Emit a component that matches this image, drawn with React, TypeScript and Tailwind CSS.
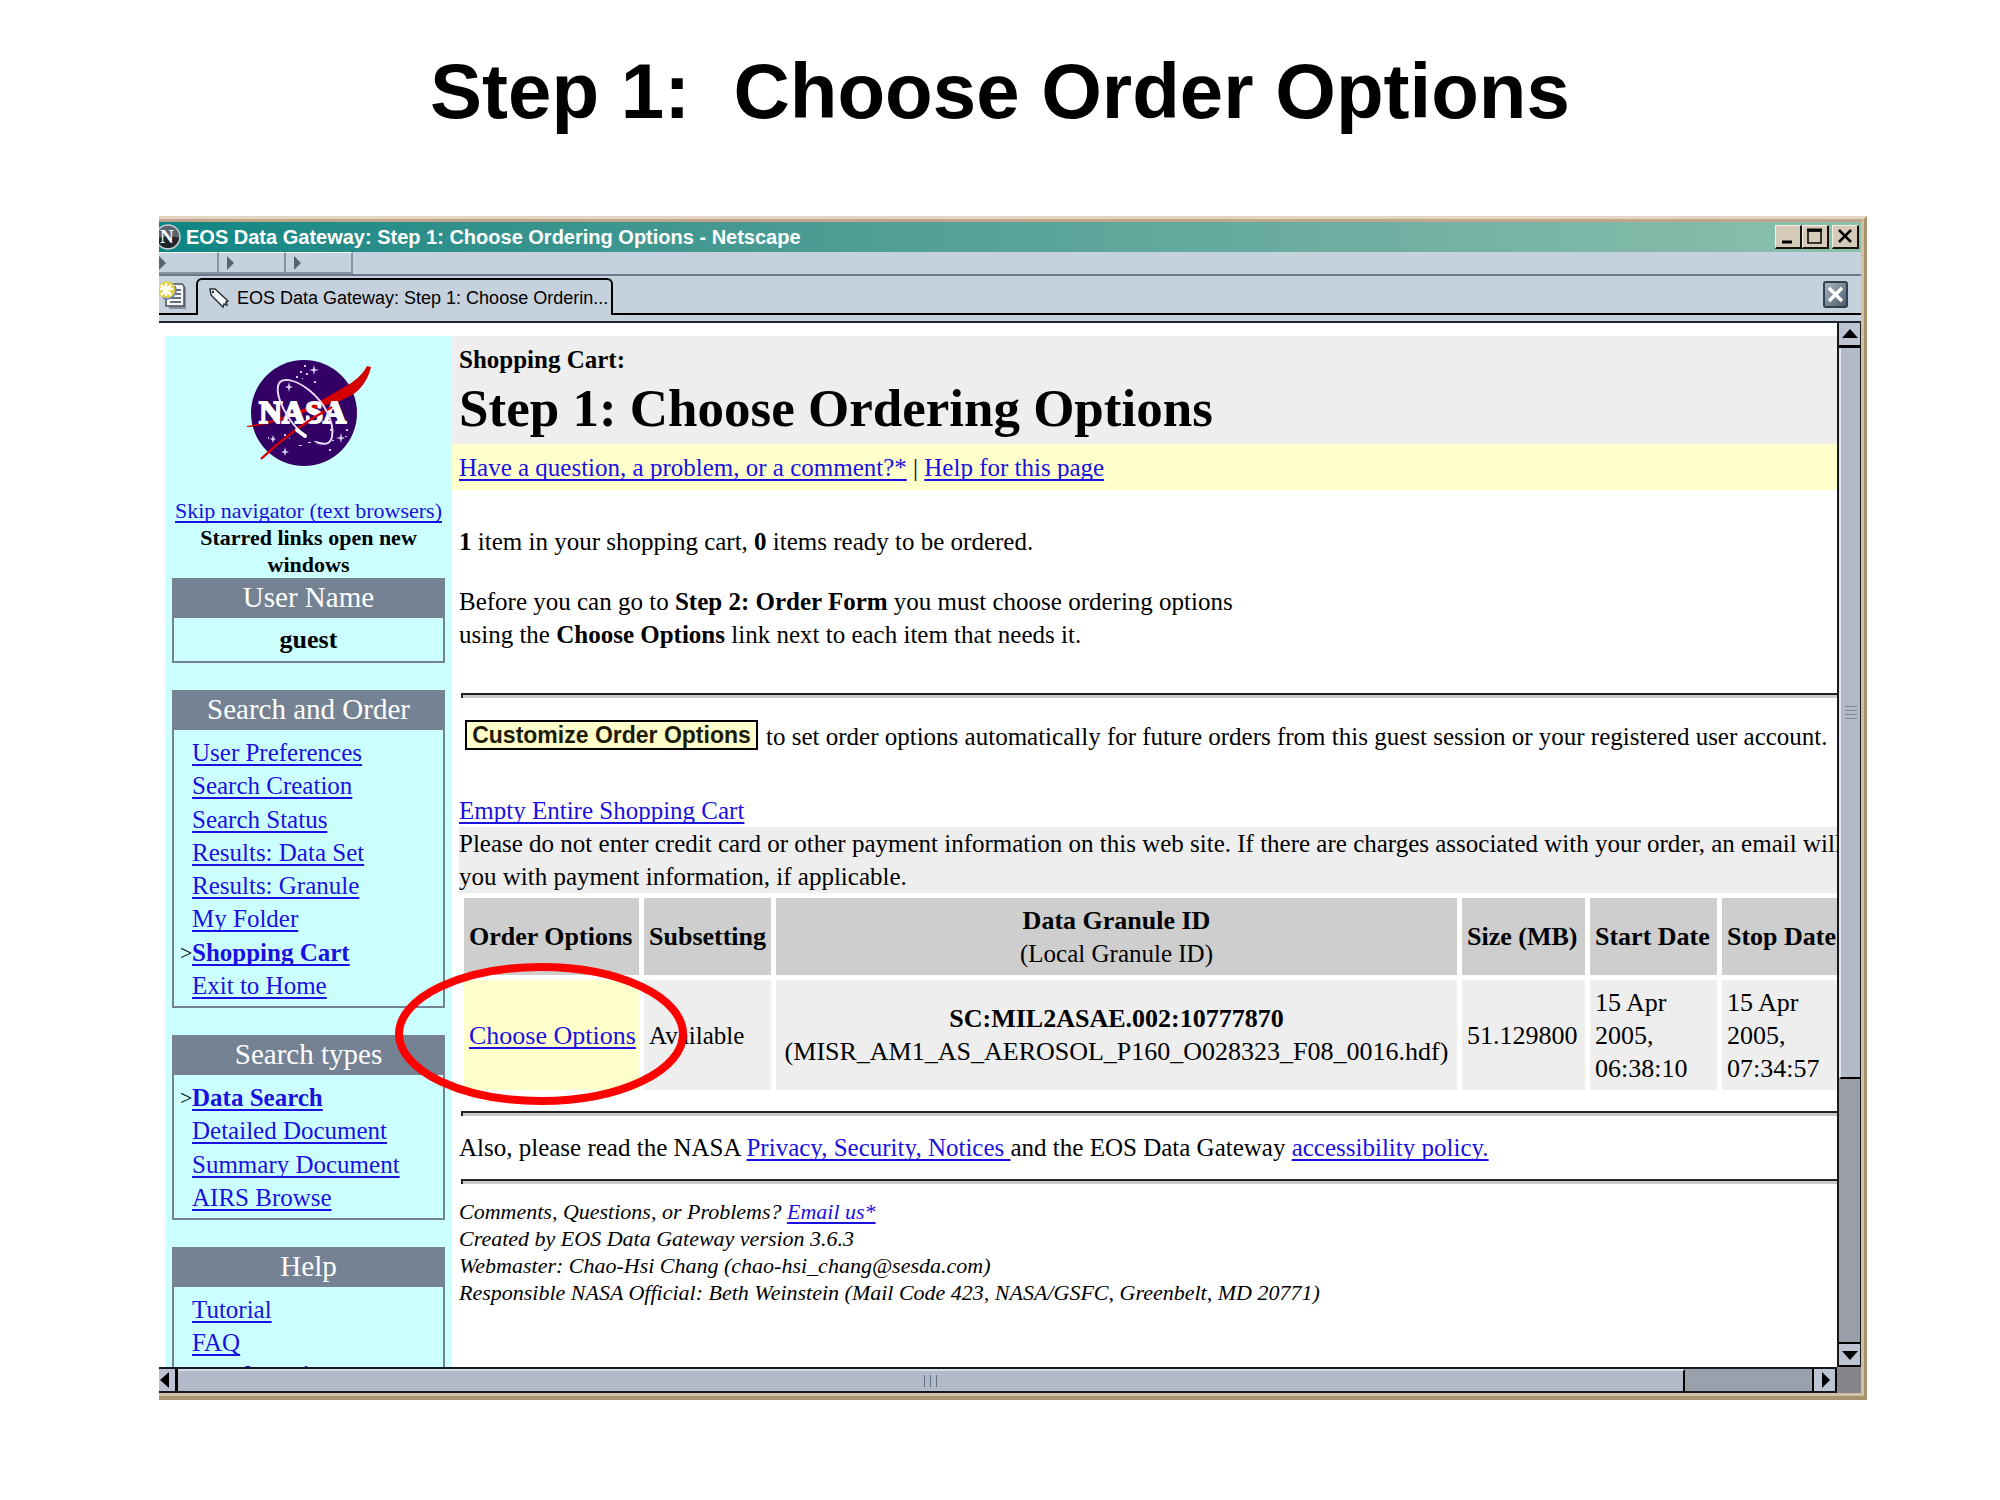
import React from "react";

type LinkItem = { label: string; current?: boolean };

const searchAndOrder: LinkItem[] = [
  { label: "User Preferences" },
  { label: "Search Creation" },
  { label: "Search Status" },
  { label: "Results: Data Set" },
  { label: "Results: Granule" },
  { label: "My Folder" },
  { label: "Shopping Cart", current: true },
  { label: "Exit to Home" },
];

const searchTypes: LinkItem[] = [
  { label: "Data Search", current: true },
  { label: "Detailed Document" },
  { label: "Summary Document" },
  { label: "AIRS Browse" },
];

function A({ children, className = "" }: { children: React.ReactNode; className?: string }) {
  return (
    <a
      href="#"
      className={`text-[#1a10e0] underline decoration-2 underline-offset-[3px] [text-decoration-skip-ink:none] ${className}`}
    >
      {children}
    </a>
  );
}

function NavBox({ title, children }: { title: string; children: React.ReactNode }) {
  return (
    <section className="border-2 border-[#748294]">
      <h2 className="h-[38px] bg-[#748294] text-center text-[29px] leading-[34px] text-white">{title}</h2>
      {children}
    </section>
  );
}

function NavList({ items, className }: { items: LinkItem[]; className: string }) {
  return (
    <ul className={`grid pb-[3px] pl-[18px] pt-[7px] text-[25px] leading-[32px] ${className}`}>
      {items.map((item) => (
        <li key={item.label} className="relative whitespace-nowrap">
          {item.current && <span className="absolute -left-3 text-[22px]">&gt;</span>}
          <A className={item.current ? "font-bold" : ""}>{item.label}</A>
        </li>
      ))}
    </ul>
  );
}

function NasaLogo() {
  return (
    <svg viewBox="0 0 180 150" className="h-[150px] w-[180px]" role="img" aria-label="NASA">
      <circle cx="84" cy="73" r="53" fill="#330066" />
      <g fill="#d9ccf2">
        <path d="M94 25l1 4 4 1-4 1-1 4-1-4-4-1 4-1z" />
        <path d="M69 42l1 4 3 1-3 1-1 4-1-4-3-1 3-1z" />
        <path d="M121 93l1 4 3 1-3 1-1 4-1-4-4-1 4-1z" />
        <path d="M65 107l1 4 3 1-3 1-1 3-1-3-3-1 3-1z" />
        <path d="M53 95l1 3 2 1-2 1-1 3-1-3-2-1 2-1z" />
        <path d="M84 25h2v2h-2zM80 31h2v2h-2zM76 36h2v2h-2zM86 33h2v2h-2zM94 41h2v2h-2zM82 38h1v1h-1zM48 97h1v2h-1zM64 94h2v2h-2zM69 98h1v1h-1zM110 89h2v2h-2zM126 89h2v2h-2zM125 96h2v1h-2zM109 109h2v2h-2zM79 105h3v1h-3zM88 102h3v1h-3zM94 101h2v1h-2zM112 100h2v1h-2z" />
      </g>
      <path
        d="M27 86C52 82 78 72 100 61L128 45C138 39 144 32 147 26L151 27C149 36 144 46 135 53C126 59 116 62 106 65C80 74 52 85 27 87Z"
        fill="#d40000"
      />
      <text
        x="39"
        y="83"
        className="font-['Liberation_Serif'] font-bold"
        fontSize="32"
        fill="#fff"
        stroke="#fff"
        strokeWidth="2"
      >
        NASA
      </text>
      <path d="M41 119C62 99 84 82 112 67" fill="none" stroke="#d40000" strokeWidth="2.4" />
      <path
        d="M85 96C66 80 56 57 58 46C60 36 75 39 89 50C104 62 115 82 112 97C110 105 104 105 96 102"
        fill="none"
        stroke="#e6dcf8"
        strokeWidth="2"
      />
      <path d="M77 90l8 6" stroke="#fff" strokeWidth="4" strokeLinecap="round" />
    </svg>
  );
}

function NetscapeIcon() {
  return (
    <svg viewBox="0 0 22 26" className="h-[26px] w-[22px] shrink-0" aria-hidden="true">
      <circle cx="9" cy="13" r="12" fill="#5c646b" stroke="#c8cccf" strokeWidth="1.5" />
      <path d="M-2 15C4 12 14 12 20 14C18 22 12 24 9 24C3 24-1 20-2 15Z" fill="#20252a" />
      <text x="1" y="19" fontSize="19" fill="#fff" className="font-['Liberation_Serif'] font-bold">
        N
      </text>
    </svg>
  );
}

function NewTabIcon() {
  return (
    <svg viewBox="0 0 28 28" className="h-7 w-7" aria-hidden="true">
      <path d="M10 6h17v22H10z" fill="#8793a0" />
      <path d="M7 3h16l2 2v20H7z" fill="#f4f6f8" stroke="#47505a" strokeWidth="1.5" />
      <path d="M13 9h9M13 13h9M12 17h10M11 21h11" stroke="#39414a" strokeWidth="1.5" />
      <circle cx="8" cy="9" r="9" fill="#dfcf4a" />
      <path d="M16 5a9 9 0 0 1-12 12" fill="none" stroke="#6b79c9" strokeWidth="1.5" />
      <path d="M7 2v13M1 8h13M2 4l10 10M12 4L2 14" stroke="#fffff0" strokeWidth="2.5" />
    </svg>
  );
}

function TagIcon() {
  return (
    <svg viewBox="0 0 22 22" className="h-[22px] w-[22px] shrink-0" aria-hidden="true">
      <path d="M2 2h5l13 12-2 1 1 3-3-1-1 3L3 8z" fill="#f7f9fb" stroke="#2b333b" strokeWidth="1.5" />
      <circle cx="5" cy="5" r="1.2" fill="#2b333b" />
    </svg>
  );
}

function Arrow({ d }: { d: string }) {
  return (
    <svg viewBox="0 0 16 16" className="h-4 w-4 shrink-0" aria-hidden="true">
      <path d={d} fill="#000" />
    </svg>
  );
}

function GripSegment() {
  return (
    <div className="flex w-[67px] items-center border-b-2 border-r-2 border-t border-[#8793a0] border-t-white pl-[8px]">
      <svg viewBox="0 0 8 14" className="h-[14px] w-2" aria-hidden="true">
        <path d="M0 0l7 7-7 7z" fill="#566372" />
      </svg>
    </div>
  );
}

function WindowButton({ label, children }: { label: string; children: React.ReactNode }) {
  return (
    <button
      type="button"
      aria-label={label}
      className="h-6 w-[27px] border-b-2 border-l border-r-2 border-t border-[#14110d] border-l-[#f5efe6] border-t-[#f5efe6] bg-[#d6cab9]"
    >
      <svg viewBox="0 0 24 21" className="h-[21px] w-6" fill="none" stroke="#000">
        {children}
      </svg>
    </button>
  );
}

function Rule() {
  return <hr className="ml-[2px] h-[5px] border-0 border-l-2 border-t-2 border-[#222] bg-[#c9c9c9]" />;
}

const th = "bg-[#cecece] px-[5px] text-left font-bold";
const td = "bg-[#eeeeee] px-[5px] text-left";

export default function App() {
  return (
    <div className="min-h-[1500px] overflow-hidden bg-white font-['Liberation_Serif',serif] text-black">
      <h1 className="whitespace-pre pt-[45px] text-center font-['Liberation_Sans',sans-serif] text-[78px] font-bold leading-[92px]">
        {"Step 1:  Choose Order Options"}
      </h1>

      <div className="relative ml-[159px] mr-[133px] mt-[79px] border-b-4 border-r-[3px] border-t-[3px] border-[#a8926f] border-t-[#e2d5c2]">
        <div className="border-b-[3px] border-r-[3px] border-t-[3px] border-[#d3c1a4] border-t-[#c0a58a] bg-[#c6d1de]">
          <header className="flex h-[30px] items-center bg-linear-to-r from-[#098684] to-[#8cc0ad] pr-[2px]">
            <NetscapeIcon />
            <span className="ml-[5px] flex-1 whitespace-nowrap font-['Liberation_Sans',sans-serif] text-[20px] font-bold leading-[28px] text-white">
              EOS Data Gateway: Step 1: Choose Ordering Options - Netscape
            </span>
            <WindowButton label="Minimize">
              <path d="M6 16h10" strokeWidth="3" />
            </WindowButton>
            <WindowButton label="Maximize">
              <path d="M5 5h13v12H5z" strokeWidth="1.5" />
              <path d="M4 4h15" strokeWidth="3" />
            </WindowButton>
            <span className="w-[3px]" />
            <WindowButton label="Close">
              <path d="M6 4l12 12M18 4L6 16" strokeWidth="2.5" />
            </WindowButton>
          </header>

          <div className="flex h-[24px] border-b-2 border-[#6c7989] [&>*:first-child]:w-[60px] [&>*:first-child]:pl-0">
            <GripSegment />
            <GripSegment />
            <GripSegment />
          </div>

          <div className="flex h-[39px] items-end">
            <button type="button" aria-label="New tab" className="flex h-full w-[37px] items-center border-b-2 border-black">
              <NewTabIcon />
            </button>
            <button
              type="button"
              className="flex h-[37px] w-[417px] items-center rounded-t-[6px] border-l-2 border-r-2 border-t-2 border-black px-[10px] text-left"
            >
              <TagIcon />
              <span className="ml-[7px] whitespace-nowrap font-['Liberation_Sans',sans-serif] text-[18px] leading-[30px]">
                EOS Data Gateway: Step 1: Choose Orderin...
              </span>
            </button>
            <div className="flex h-full flex-1 items-center justify-end border-b-2 border-black pr-[13px]">
              <button
                type="button"
                aria-label="Close tab"
                className="h-[27px] w-[25px] rounded-[3px] border-2 border-[#33404e] bg-linear-to-br from-[#a9b6c4] to-[#4d5b6b]"
              >
                <svg viewBox="0 0 21 23" className="h-[23px] w-[21px]">
                  <path d="M4 5l13 13M17 5L4 18" stroke="#fff" strokeWidth="3.5" />
                </svg>
              </button>
            </div>
          </div>
          <div className="h-[8px] border-b-2 border-[#22262b]" />

          <div className="flex h-[1044px]">
            <div className="flex min-w-0 flex-1 overflow-hidden bg-white pl-[6px] pt-[13px]">
              <nav className="h-[1100px] w-[287px] shrink-0 bg-[#ccffff] px-[7px]">
                <div className="-mx-[7px] flex h-[161px] justify-center pl-[2px] pt-[4px]">
                  <NasaLogo />
                </div>
                <p className="-mx-[7px] whitespace-nowrap text-center text-[22px] leading-[27px]">
                  <A>Skip navigator (text browsers)</A>
                </p>
                <p className="text-center text-[22px] font-bold leading-[27px]">
                  Starred links open new
                  <br />
                  windows
                </p>
                <div className="flex flex-col gap-[27px]">
                  <NavBox title="User Name">
                    <p className="h-[43px] text-center text-[26px] font-bold leading-[44px]">guest</p>
                  </NavBox>
                  <NavBox title="Search and Order">
                    <NavList items={searchAndOrder} className="h-[276px]" />
                  </NavBox>
                  <NavBox title="Search types">
                    <NavList items={searchTypes} className="h-[143px]" />
                  </NavBox>
                  <NavBox title="Help">
                    <NavList items={[{ label: "Tutorial" }, { label: "FAQ" }]} className="h-[76px]" />
                    <div className="mt-[-3px] pl-[18px] text-[25px] leading-[32px]">
                      <A className="font-bold">Hands-on it</A>
                    </div>
                  </NavBox>
                </div>
              </nav>

              <main className="min-w-0 flex-1 overflow-hidden whitespace-nowrap text-[25px] leading-[33px]">
                <div className="h-[108px] bg-[#eeeeee] pl-[7px] pt-[7px]">
                  <p className="font-bold">Shopping Cart:</p>
                  <h2 className="text-[53px] font-bold leading-[64px]">Step 1: Choose Ordering Options</h2>
                </div>
                <p className="h-[46px] bg-[#ffffcc] pl-[7px] pt-[7px]">
                  <A>Have a question, a problem, or a comment?*</A> | <A>Help for this page</A>
                </p>

                <div className="pl-[7px]">
                  <p className="mt-[35px]">
                    <b>1</b> item in your shopping cart, <b>0</b> items ready to be ordered.
                  </p>
                  <p className="mt-[27px]">
                    Before you can go to <b>Step 2: Order Form</b> you must choose ordering options
                    <br />
                    using the <b>Choose Options</b> link next to each item that needs it.
                  </p>
                  <div className="mt-[42px]">
                    <Rule />
                  </div>
                  <p className="ml-[6px] mt-[22px] flex h-[32px] items-start">
                    <button
                      type="button"
                      className="h-[30px] w-[293px] border-2 border-black bg-[#ffffcc] font-['Liberation_Sans',sans-serif] text-[23px] font-bold leading-[26px] text-[#1c1a05]"
                    >
                      Customize Order Options
                    </button>
                    <span className="ml-[8px]">
                      to set order options automatically for future orders from this guest session or your registered user account.
                    </span>
                  </p>
                  <p className="mt-[42px]">
                    <A>Empty Entire Shopping Cart</A>
                  </p>
                  <p className="bg-[#eeeeee]">
                    Please do not enter credit card or other payment information on this web site. If there are charges associated with your order, an email will
                    <br />
                    you with payment information, if applicable.
                  </p>

                  <table className="w-[1402px] table-fixed border-separate border-spacing-[5px] text-[26px]">
                    <colgroup>
                      <col className="w-[175px]" />
                      <col className="w-[127px]" />
                      <col className="w-[681px]" />
                      <col className="w-[123px]" />
                      <col className="w-[127px]" />
                      <col />
                    </colgroup>
                    <thead>
                      <tr className="h-[77px]">
                        <th className={th}>Order Options</th>
                        <th className={th}>Subsetting</th>
                        <th className="bg-[#cecece] px-[5px] text-center font-bold">
                          Data Granule ID
                          <br />
                          <span className="text-[25px] font-normal">(Local Granule ID)</span>
                        </th>
                        <th className={th}>Size (MB)</th>
                        <th className={th}>Start Date</th>
                        <th className={th}>Stop Date</th>
                      </tr>
                    </thead>
                    <tbody>
                      <tr className="h-[110px]">
                        <td className="bg-[#ffffcc] px-[5px]">
                          <A>Choose Options</A>
                        </td>
                        <td className="bg-[#eeeeee] px-[5px] text-[25px]">Available</td>
                        <td className="bg-[#eeeeee] px-[5px] text-center">
                          <b>SC:MIL2ASAE.002:10777870</b>
                          <br />
                          (MISR_AM1_AS_AEROSOL_P160_O028323_F08_0016.hdf)
                        </td>
                        <td className={td}>51.129800</td>
                        <td className={td}>
                          15 Apr
                          <br />
                          2005,
                          <br />
                          06:38:10
                        </td>
                        <td className={td}>
                          15 Apr
                          <br />
                          2005,
                          <br />
                          07:34:57
                        </td>
                      </tr>
                    </tbody>
                  </table>

                  <div className="mt-[16px]">
                    <Rule />
                  </div>
                  <p className="mt-[15px]">
                    Also, please read the NASA <A>Privacy, Security, Notices </A>and the EOS Data Gateway{" "}
                    <A>accessibility policy.</A>
                  </p>
                  <div className="mt-[15px]">
                    <Rule />
                  </div>
                  <address className="mt-[14px] text-[22px] italic leading-[27px]">
                    Comments, Questions, or Problems? <A>Email us*</A>
                    <br />
                    Created by EOS Data Gateway version 3.6.3
                    <br />
                    Webmaster: Chao-Hsi Chang (chao-hsi_chang@sesda.com)
                    <br />
                    Responsible NASA Official: Beth Weinstein (Mail Code 423, NASA/GSFC, Greenbelt, MD 20771)
                  </address>
                </div>
              </main>
            </div>

            <div className="flex w-6 shrink-0 flex-col border-l-2 border-r border-[#15181c] bg-[#9a9ea9]">
              <button type="button" aria-label="Scroll up" className="flex h-[25px] items-center justify-center border-b-[3px] border-black bg-[#bcc3d2]">
                <Arrow d="M0 12L8 3l8 9z" />
              </button>
              <div className="flex h-[731px] flex-col items-center justify-center gap-[3px] border-b-2 border-l-2 border-black border-l-[#dfe4ee] bg-[#b3b9c8]">
                <span className="h-px w-3 bg-[#7d8796]" />
                <span className="h-px w-3 bg-[#7d8796]" />
                <span className="h-px w-3 bg-[#7d8796]" />
                <span className="h-px w-3 bg-[#7d8796]" />
              </div>
              <div className="flex-1" />
              <button type="button" aria-label="Scroll down" className="flex h-[25px] items-center justify-center border-b-2 border-t-2 border-black bg-[#bcc3d2]">
                <Arrow d="M0 4h16l-8 9z" />
              </button>
            </div>
          </div>

          <div className="flex h-[26px]">
            <div className="flex min-w-0 flex-1 border-b-2 border-t-2 border-[#15181c] bg-[#9ba0ad]">
              <button type="button" aria-label="Scroll left" className="flex w-[19px] items-center border-r-[3px] border-black bg-[#bcc3d2]">
                <Arrow d="M10 0v16L1 8z" />
              </button>
              <div className="flex flex-1 items-center justify-center gap-[5px] border-r-2 border-t-2 border-black border-t-[#d5dae5] bg-[#b3b9c8]">
                <span className="h-3 w-px bg-[#5d7086]" />
                <span className="h-3 w-px bg-[#5d7086]" />
                <span className="h-3 w-px bg-[#5d7086]" />
              </div>
              <div className="w-[127px]" />
              <button type="button" aria-label="Scroll right" className="flex w-[25px] items-center justify-center border-l-2 border-r-2 border-black bg-[#bcc3d2]">
                <Arrow d="M5 0v16l8-8z" />
              </button>
            </div>
            <div className="w-6 bg-[#858589]" />
          </div>
        </div>

        <svg viewBox="0 0 292 142" className="pointer-events-none absolute left-[236px] top-[744px] h-[142px] w-[292px]" aria-hidden="true">
          <ellipse cx="146" cy="71" rx="142" ry="67" fill="none" stroke="#ff0000" strokeWidth="8" />
        </svg>
      </div>
    </div>
  );
}
